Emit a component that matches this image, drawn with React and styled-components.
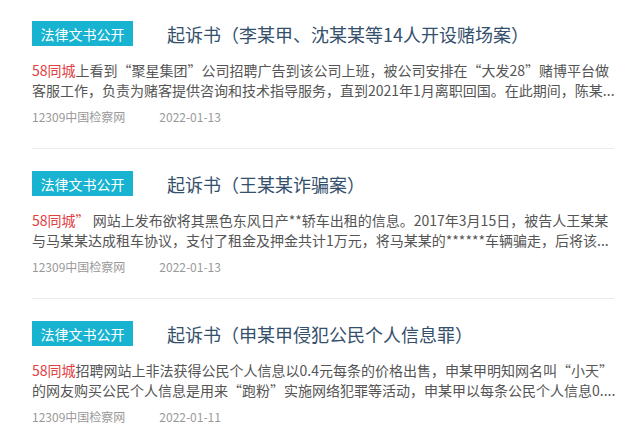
import React from 'react';
import styled, { createGlobalStyle } from 'styled-components';

const GlobalStyle = createGlobalStyle`
  body {
    margin: 0;
    background: #fff;
    font-family: "Microsoft YaHei", "Noto Sans CJK SC", sans-serif;
  }
`

const List = styled.div`
  width: 582px;
  padding: 0 16px 0 32px;
`

const Item = styled.div`
  padding: ${(props) => (props.first ? '21px' : '22px')} 0 22px;
  border-bottom: ${(props) => (props.last ? 'none' : '1px solid #ebebeb')};
`

const Header = styled.div`
  display: flex;
  align-items: center;
  height: 25px;
`

const Badge = styled.span`
  display: inline-flex;
  align-items: center;
  justify-content: center;
  width: 101px;
  height: 25px;
  background: #17b3d1;
  color: #fff;
  font-size: 14px;
  flex-shrink: 0;
`

const Title = styled.a`
  margin-left: 34px;
  font-size: 18px;
  color: #35506c;
  text-decoration: none;
  white-space: nowrap;
`

const Desc = styled.div`
  margin-top: 14px;
  font-size: 14px;
  line-height: 20px;
  color: #555;
`

const Line = styled.div`
  white-space: nowrap;
`

const Red = styled.span`
  color: #e2403f;
`

const Meta = styled.div`
  display: flex;
  gap: 34px;
  margin-top: 8px;
  font-size: 12px;
  line-height: 18px;
  color: #999;
`

const items = [
  {
    title: '起诉书（李某甲、沈某某等14人开设赌场案）',
    red: '58同城',
    line1: '上看到“聚星集团”公司招聘广告到该公司上班，被公司安排在“大发28”赌博平台做',
    line2: '客服工作，负责为赌客提供咨询和技术指导服务，直到2021年1月离职回国。在此期间，陈某...',
    date: '2022-01-13',
  },
  {
    title: '起诉书（王某某诈骗案）',
    red: '58同城”',
    line1: ' 网站上发布欲将其黑色东风日产**轿车出租的信息。2017年3月15日，被告人王某某',
    line2: '与马某某达成租车协议，支付了租金及押金共计1万元，将马某某的******车辆骗走，后将该...',
    date: '2022-01-13',
  },
  {
    title: '起诉书（申某甲侵犯公民个人信息罪）',
    red: '58同城',
    line1: '招聘网站上非法获得公民个人信息以0.4元每条的价格出售，申某甲明知网名叫“小天”',
    line2: '的网友购买公民个人信息是用来“跑粉”实施网络犯罪等活动，申某甲以每条公民个人信息0....',
    date: '2022-01-11',
  },
];

function App() {
  return (
    <>
      <GlobalStyle />
      <List>
        {items.map((item, i) => (
          <Item key={i} first={i === 0} last={i === items.length - 1}>
            <Header>
              <Badge>法律文书公开</Badge>
              <Title href="#">{item.title}</Title>
            </Header>
            <Desc>
              <Line>
                <Red>{item.red}</Red>
                {item.line1}
              </Line>
              <Line>{item.line2}</Line>
            </Desc>
            <Meta>
              <span>12309中国检察网</span>
              <span>{item.date}</span>
            </Meta>
          </Item>
        ))}
      </List>
    </>
  );
}

export default App
